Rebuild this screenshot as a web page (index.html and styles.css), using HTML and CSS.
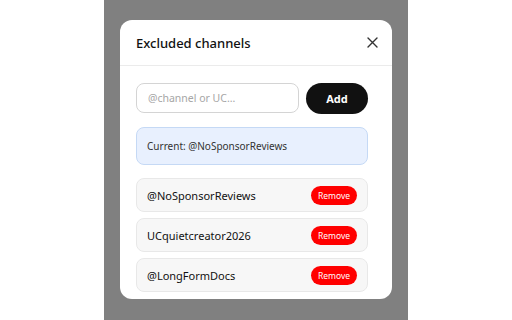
FILE: index.html
```html
<!DOCTYPE html>
<html lang="en">
<head>
    <meta charset="UTF-8">
    <meta name="viewport" content="width=device-width, initial-scale=1.0">
    <title>Excluded channels</title>
    <link rel="stylesheet" href="styles.css">
</head>
<body>
    <div class="overlay">
        <div class="modal">
            <div class="modal-header">
                <h2>Excluded channels</h2>
                <button class="close" aria-label="Close">
                    <svg width="11" height="11" viewBox="0 0 11 11">
                        <path d="M1 1L10 10M10 1L1 10" stroke="#333" stroke-width="1.4" stroke-linecap="round"/>
                    </svg>
                </button>
            </div>
            <div class="modal-body">
                <div class="add-row">
                    <input type="text" placeholder="@channel or UC...">
                    <button class="add">Add</button>
                </div>
                <div class="current">Current: @NoSponsorReviews</div>
                <div class="list">
                    <div class="item">
                        <span>@NoSponsorReviews</span>
                        <button class="remove">Remove</button>
                    </div>
                    <div class="item">
                        <span>UCquietcreator2026</span>
                        <button class="remove">Remove</button>
                    </div>
                    <div class="item">
                        <span>@LongFormDocs</span>
                        <button class="remove">Remove</button>
                    </div>
                </div>
            </div>
        </div>
    </div>
</body>
</html>
```

FILE: styles.css
```css
body {
    margin: 0;
    background: #ffffff;
    font-family: "Noto Sans", "Open Sans", sans-serif;
    color: #111;
}
.overlay {
    width: 304px;
    height: 320px;
    margin-left: 104px;
    background: #808080;
    padding: 20px 16px 0;
    box-sizing: border-box;
}
.modal {
    background: #ffffff;
    border-radius: 12px;
    height: 279px;
    overflow: hidden;
}
.modal-header {
    display: flex;
    align-items: center;
    justify-content: space-between;
    height: 45px;
    padding: 0 12px 0 16px;
    border-bottom: 1px solid #ebebeb;
}
h2 {
    margin: 0;
    font-size: 13px;
    font-weight: 500;
}
.close {
    background: none;
    border: none;
    padding: 0;
    width: 16px;
    height: 16px;
    display: flex;
    align-items: center;
    justify-content: center;
}
.modal-body {
    padding: 17px 24px 0 16px;
}
.add-row {
    display: flex;
    gap: 7px;
}
input {
    width: 163px;
    height: 30px;
    box-sizing: border-box;
    border: 1.5px solid #d4d4d4;
    border-radius: 8px;
    padding: 0 11px;
    font-family: inherit;
    font-size: 10.5px;
    outline: none;
}
input::placeholder {
    color: #a6a6a6;
}
.add {
    width: 62px;
    height: 31px;
    border: none;
    border-radius: 16px;
    background: #111111;
    color: #ffffff;
    font-family: inherit;
    font-weight: 700;
    font-size: 11px;
}
.current {
    margin-top: 13px;
    height: 38px;
    box-sizing: border-box;
    background: #e8f0fe;
    border: 1px solid #c5d9f5;
    border-radius: 8px;
    padding: 0 10px;
    display: flex;
    align-items: center;
    font-size: 10px;
    color: #333;
}
.list {
    margin-top: 13px;
    display: flex;
    flex-direction: column;
    gap: 6px;
}
.item {
    height: 34px;
    box-sizing: border-box;
    background: #f7f7f7;
    border: 1px solid #e8e8e8;
    border-radius: 8px;
    padding: 0 10px;
    display: flex;
    align-items: center;
    justify-content: space-between;
    font-size: 11px;
}
.remove {
    width: 46px;
    height: 19px;
    border: none;
    border-radius: 10px;
    background: #ff0000;
    color: #ffffff;
    font-family: inherit;
    font-size: 8.5px;
    padding: 0;
}
```
